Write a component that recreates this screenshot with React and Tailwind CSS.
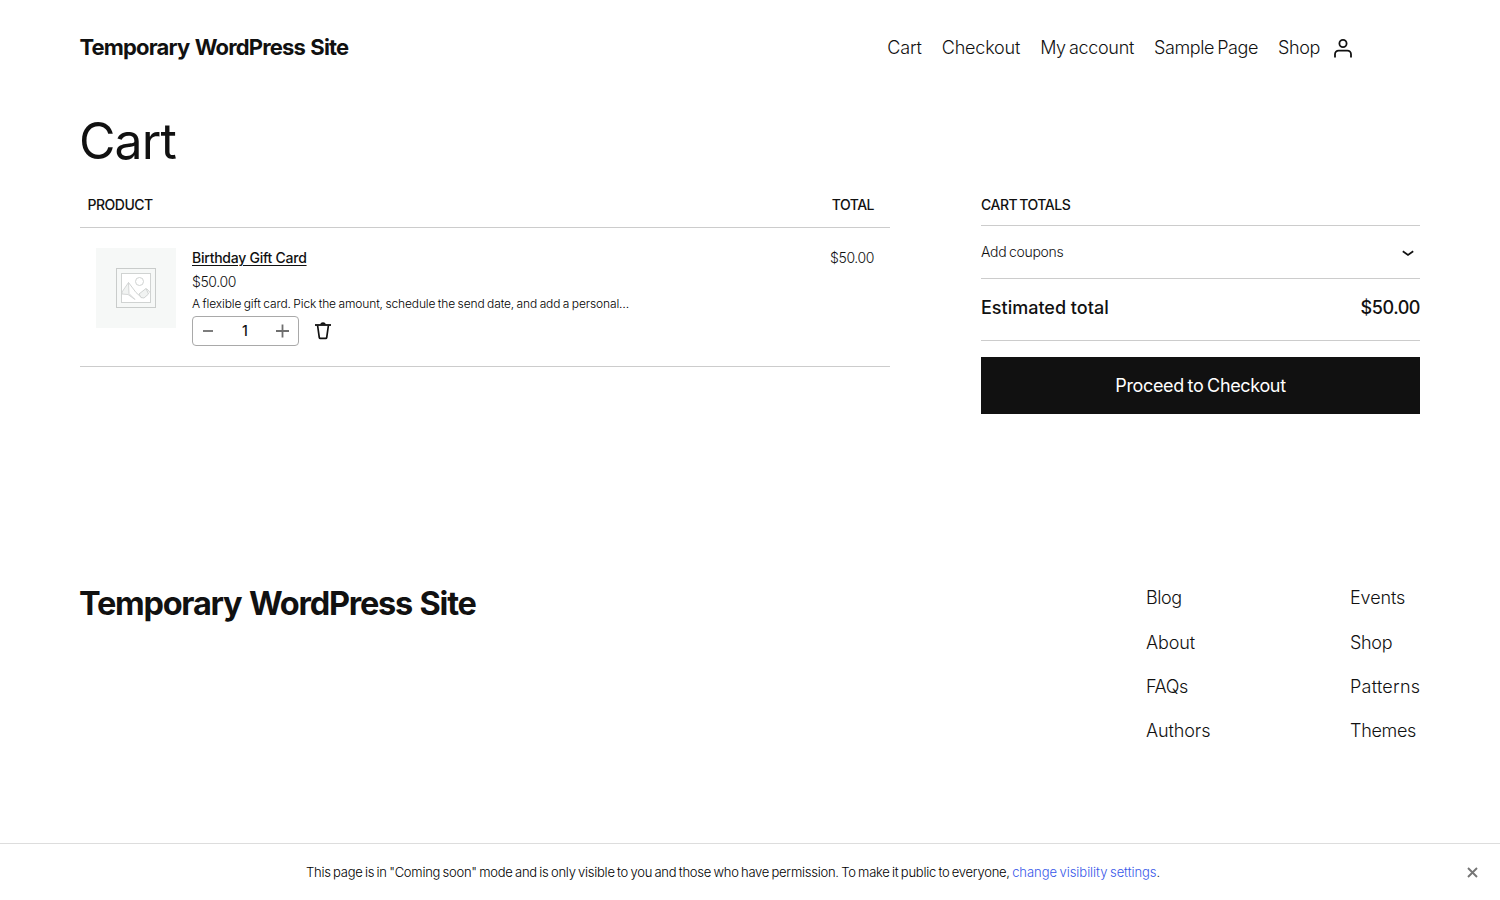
import { useState } from 'react'

const NAV_LINKS = [
  { label: 'Cart', className: 'tracking-[-0.15px]' },
  { label: 'Checkout', className: 'tracking-[-0.2px]' },
  { label: 'My account', className: 'tracking-[-0.33px] [word-spacing:-1.5px]' },
  { label: 'Sample Page', className: 'tracking-[-0.4px] [word-spacing:-1.5px]' },
  { label: 'Shop', className: 'tracking-[-0.38px]' },
]

const FOOTER_COLUMNS = [
  {
    id: 'site',
    width: 'w-[64px]',
    links: [
      { label: 'Blog', className: 'tracking-[-0.4px]' },
      { label: 'About', className: 'tracking-[-0.1px]' },
      { label: 'FAQs', className: 'tracking-[-0.4px]' },
      { label: 'Authors', className: 'tracking-[-0.1px]' },
    ],
  },
  {
    id: 'store',
    width: 'w-[70px]',
    links: [
      { label: 'Events', className: 'tracking-[-0.1px]' },
      { label: 'Shop', className: 'tracking-[-0.3px]' },
      { label: 'Patterns', className: 'tracking-[0.25px]' },
      { label: 'Themes', className: 'tracking-[-0.3px]' },
    ],
  },
]

const UNIT_PRICE = 50

function formatPrice(amount) {
  return `$${amount.toFixed(2)}`
}

function AccountIcon() {
  return (
    <svg width="18" height="19" viewBox="0 0 18 19" fill="none" stroke="currentColor" strokeWidth="1.8">
      <circle cx="9" cy="4.5" r="3.6" />
      <path d="M1 18.5v-3.3a3.6 3.6 0 0 1 3.6-3.6h8.8a3.6 3.6 0 0 1 3.6 3.6v3.3" />
    </svg>
  )
}

function PlaceholderImage() {
  return (
    <svg width="80" height="80" viewBox="0 0 80 80" fill="none" className="bg-[#f6f8f7]">
      <rect x="20.5" y="20.5" width="39" height="39" stroke="#c9cccb" />
      <rect x="25.5" y="25.5" width="29" height="29" fill="#fff" stroke="#d0d3d2" />
      <circle cx="43.5" cy="33.5" r="4" stroke="#d0d3d2" />
      <path d="M26 44l6.500-9.500.5 11 6 6-7-5-6-.5z" fill="#f1f3f2" stroke="#d0d3d2" strokeWidth="0.9" />
      <path d="M32.500 34.500l7.500 10 6 5.500M50.500 40.500l4 4.500" stroke="#d0d3d2" />
      <path d="M43 46l7-5.500 2.500 5.500-4.500 4-3-.5z" fill="#f1f3f2" stroke="#d0d3d2" />
    </svg>
  )
}

function TrashIcon() {
  return (
    <svg width="16" height="18" viewBox="0 0 16 18" fill="none" stroke="currentColor">
      <path d="M0 3h16" strokeWidth="1.8" />
      <path d="M5.5 2.5a2.5 2 0 0 1 5 0" fill="currentColor" strokeWidth="0.5" />
      <path d="M2.6 3.5l1.700 12c.1.6.4.9 1 .9h5.400c.6 0 .9-.3 1-.9l1.700-12" strokeWidth="1.7" />
    </svg>
  )
}

function QuantityStepper({ quantity, onChange }) {
  return (
    <div className="flex h-[30px] w-[107px] items-center justify-between rounded border border-[#a9a9a9] text-[#6f6f6f]">
      <button aria-label="Reduce quantity" onClick={() => onChange(Math.max(1, quantity - 1))} className="flex w-[30px] justify-center">
        <svg width="10" height="14" viewBox="0 0 10 14" stroke="currentColor" strokeWidth="1.8">
          <path d="M0 7h10" />
        </svg>
      </button>
      <span className="text-[14px] font-medium leading-none text-[#111]">{quantity}</span>
      <button aria-label="Increase quantity" onClick={() => onChange(quantity + 1)} className="flex w-[31px] justify-center">
        <svg width="13" height="14" viewBox="0 0 13 14" stroke="currentColor" strokeWidth="1.8">
          <path d="M0 7h13M6.5 0.5v13" />
        </svg>
      </button>
    </div>
  )
}

function CartItems({ quantity, setQuantity }) {
  return (
    <section className="w-[810px]">
      <div className="flex h-[34px] justify-between border-b border-[#ccc] pl-[7.5px] pr-4 text-[14px] font-medium leading-[22px] tracking-[-0.5px]">
        <span>PRODUCT</span>
        <span>TOTAL</span>
      </div>
      <div className="flex h-[139px] items-start border-b border-[#ccc] px-4 pt-5">
        <PlaceholderImage />
        <div className="ml-4 flex flex-col items-start">
          <a href="#product" className="text-[14px] font-medium leading-5 tracking-[-0.25px] underline underline-offset-2">
            Birthday Gift Card
          </a>
          <span className="mt-1 text-[14px] leading-5 tracking-[-0.4px]">{formatPrice(UNIT_PRICE)}</span>
          <p className="mt-0.5 whitespace-nowrap text-[12px] leading-5 tracking-[-0.13px] text-black [word-spacing:-0.7px]">
            A flexible gift card. Pick the amount, schedule the send date, and add a personal…
          </p>
          <div className="mt-0.5 flex items-center gap-4">
            <QuantityStepper quantity={quantity} onChange={setQuantity} />
            <button aria-label="Remove item">
              <TrashIcon />
            </button>
          </div>
        </div>
        <span className="ml-auto text-[14px] leading-5 tracking-[-0.4px]">{formatPrice(UNIT_PRICE * quantity)}</span>
      </div>
    </section>
  )
}

function CartTotals({ total }) {
  return (
    <aside className="w-[439px]">
      <h2 className="h-[32px] border-b border-[#ccc] text-[14px] font-medium leading-[22px] tracking-[-0.5px] [word-spacing:-1px]">
        CART TOTALS
      </h2>
      <button className="flex h-[53px] w-full items-center justify-between border-b border-[#ccc] pr-[6px] text-[14px] font-light">
        <span className="pb-0.5 tracking-[-0.3px] [word-spacing:-1px]">Add coupons</span>
        <svg width="12" height="7" viewBox="0 0 12 7" fill="none" stroke="currentColor" strokeWidth="1.7" className="mt-0.5">
          <path d="M0.8 1.3L6 5l5.200-3.700" />
        </svg>
      </button>
      <div className="flex h-[62px] justify-between border-b border-[#ccc] pt-[15px] text-[18px] font-medium leading-7">
        <span>Estimated total</span>
        <span className="tracking-[-0.45px]">{formatPrice(total)}</span>
      </div>
      <button className="mt-4 h-[57px] w-full bg-[#111] text-[18px] font-normal tracking-[-0.35px] text-white [word-spacing:-1px]">
        Proceed to Checkout
      </button>
    </aside>
  )
}

export default function App() {
  const [quantity, setQuantity] = useState(1)
  const [bannerOpen, setBannerOpen] = useState(true)

  return (
    <div className="flex h-screen flex-col overflow-hidden bg-white font-['Inter',sans-serif] font-light text-[#111]">
      <header className="flex h-24 shrink-0 items-center justify-between pb-0.5 pl-[79.5px] pr-[148px]">
        <a href="#home" className="text-[22px] font-bold tracking-[-0.85px] [word-spacing:1px]">Temporary WordPress Site</a>
        <div className="flex items-center">
          <nav className="flex gap-5 text-[18px]">
            {NAV_LINKS.map(link => (
              <a key={link.label} href="#nav" className={link.className}>{link.label}</a>
            ))}
          </nav>
          <a href="#account" aria-label="Account" className="ml-[14px] mt-0.5">
            <AccountIcon />
          </a>
        </div>
      </header>

      <main className="px-20">
        <h1 className="-ml-px mt-[17px] text-[50px] font-normal leading-[56px] tracking-[-0.9px]">Cart</h1>
        <div className="mt-[25px] flex justify-between">
          <CartItems quantity={quantity} setQuantity={setQuantity} />
          <CartTotals total={UNIT_PRICE * quantity} />
        </div>
      </main>

      <footer className="mt-[162px] flex items-start justify-between pl-[79px] pr-20">
        <a href="#home" className="mt-1 text-[32.5px] font-bold leading-[48px] tracking-[-1.25px] [word-spacing:1.2px]">
          Temporary WordPress Site
        </a>
        <div className="flex gap-[140px] pt-2">
          {FOOTER_COLUMNS.map(column => (
            <ul key={column.id} className={`flex flex-col gap-[16.3px] pt-[0.3px] text-[18px] leading-7 ${column.width}`}>
              {column.links.map(link => (
                <li key={link.label}><a href="#footer" className={link.className}>{link.label}</a></li>
              ))}
            </ul>
          ))}
        </div>
      </footer>

      {bannerOpen && (
        <div className="mt-auto flex h-[57px] shrink-0 items-center border-t border-[#ddd] pl-[306px] pr-[22px] text-[13px] text-black">
          <p className="whitespace-nowrap pt-0.5 tracking-[-0.25px] [word-spacing:-1px]">
            This page is in "Coming soon" mode and is only visible to you and those who have permission. To make it public to everyone,{' '}
            <a href="#visibility" className="tracking-[-0.05px] text-[#3858e9]">change visibility settings</a>.
          </p>
          <button aria-label="Dismiss" onClick={() => setBannerOpen(false)} className="ml-auto">
            <svg width="11" height="11" viewBox="0 0 11 11" stroke="#757575" strokeWidth="1.9">
              <path d="M1 1l9 9M10 1l-9 9" />
            </svg>
          </button>
        </div>
      )}
    </div>
  )
}
